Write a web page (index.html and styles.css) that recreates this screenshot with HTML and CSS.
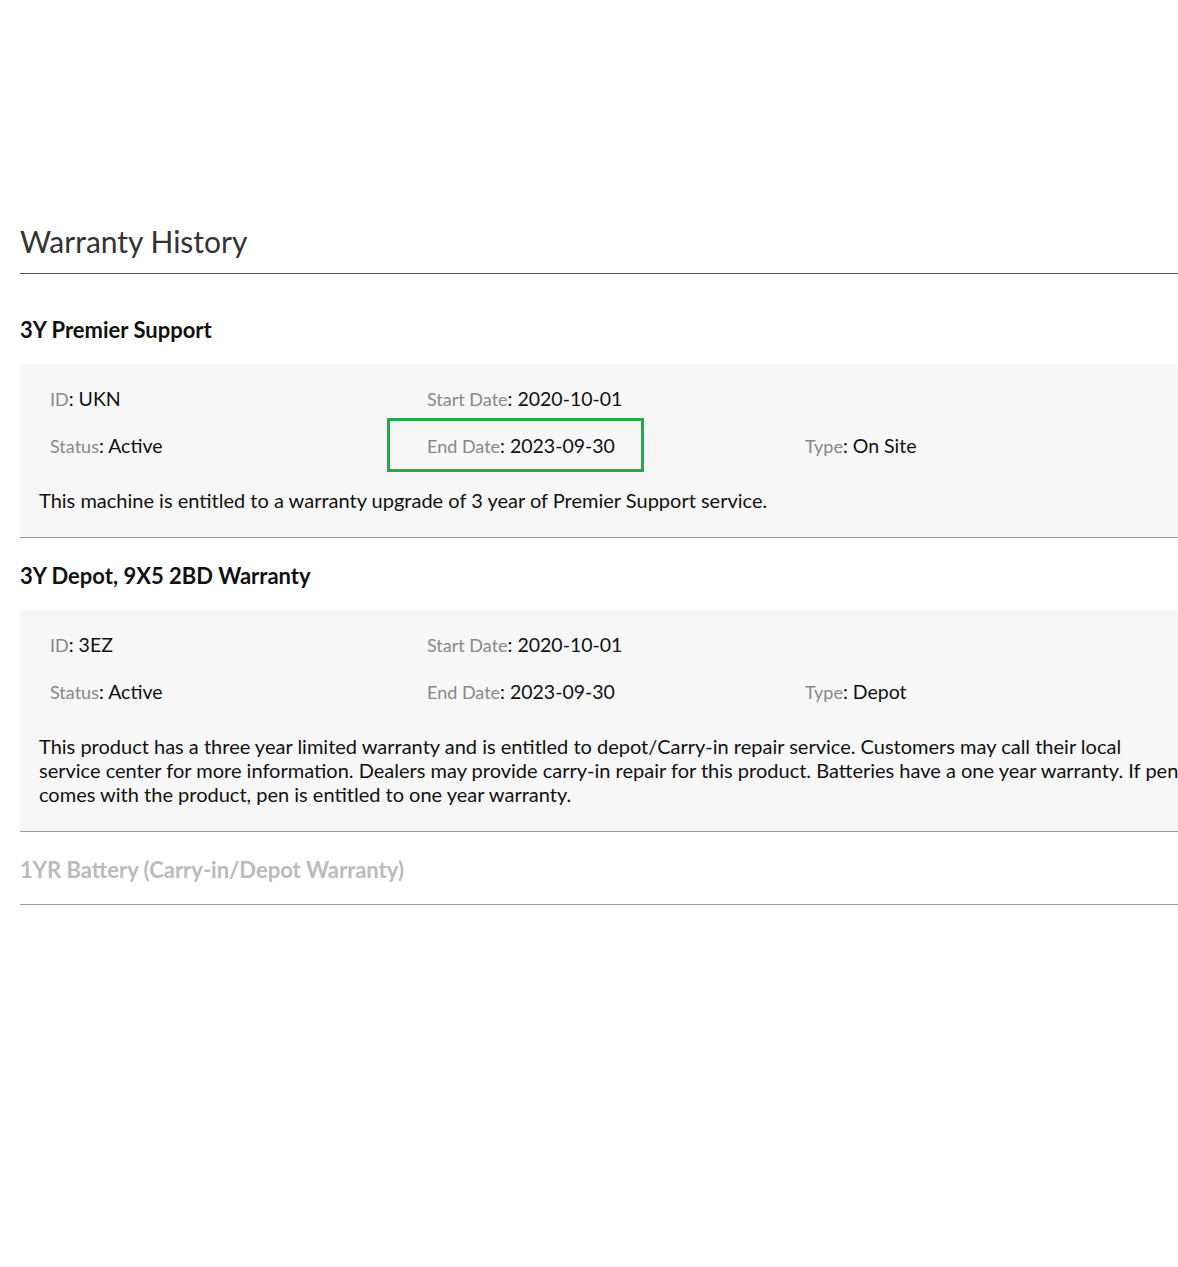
FILE: index.html
```html
<!DOCTYPE html>
<html lang="en">

<head>
    <meta charset="UTF-8">
    <meta name="viewport" content="width=device-width, initial-scale=1.0">
    <title>Warranty History</title>
    <link rel="stylesheet" href="styles.css">
</head>

<body>
    <div class="container">
        <h1 class="titulo">Warranty History</h1>

        <div class="garantia">
            <h2>3Y Premier Support</h2>
            <div class="panel">
                <div class="campos">
                    <div class="campo"><span class="etiqueta">ID</span>: UKN</div>
                    <div class="campo"><span class="etiqueta">Start Date</span>: 2020-10-01</div>
                    <div class="campo"></div>
                    <div class="campo"><span class="etiqueta">Status</span>: Active</div>
                    <div class="campo marcado"><span class="etiqueta">End Date</span>: 2023-09-30</div>
                    <div class="campo"><span class="etiqueta">Type</span>: On Site</div>
                </div>
                <p class="descripcion">This machine is entitled to a warranty upgrade of 3 year of Premier Support service.</p>
            </div>
        </div>

        <div class="garantia">
            <h2>3Y Depot, 9X5 2BD Warranty</h2>
            <div class="panel">
                <div class="campos">
                    <div class="campo"><span class="etiqueta">ID</span>: 3EZ</div>
                    <div class="campo"><span class="etiqueta">Start Date</span>: 2020-10-01</div>
                    <div class="campo"></div>
                    <div class="campo"><span class="etiqueta">Status</span>: Active</div>
                    <div class="campo"><span class="etiqueta">End Date</span>: 2023-09-30</div>
                    <div class="campo"><span class="etiqueta">Type</span>: Depot</div>
                </div>
                <p class="descripcion">This product has a three year limited warranty and is entitled to depot/Carry-in repair service. Customers may call their local service center for more information. Dealers may provide carry-in repair for this product. Batteries have a one year warranty. If pen comes with the product, pen is entitled to one year warranty.</p>
            </div>
        </div>

        <div class="garantia inactiva">
            <h2>1YR Battery (Carry-in/Depot Warranty)</h2>
        </div>
    </div>
</body>

</html>
```

FILE: styles.css
```css
body {
    font-family: Lato, "Open Sans", sans-serif;
    margin: 0;
    padding: 0;
    background-color: white;
    color: #111;
    overflow: hidden;
}

.container {
    width: 1180px;
    margin-left: 20px;
    padding-top: 224px;
}

.titulo {
    font-size: 30px;
    font-weight: normal;
    color: #333;
    margin: 0;
    line-height: 34px;
    padding-bottom: 15px;
    border-bottom: 1px solid #555;
    margin-bottom: 18px;
}

.garantia {
    border-bottom: 1px solid #999;
}

.garantia h2 {
    font-size: 22px;
    font-weight: bold;
    line-height: 28px;
    margin: 0;
    padding: 24px 0 20px;
    color: #111;
}

.inactiva h2 {
    color: #bbb;
}

.panel {
    background-color: #f7f7f7;
    padding: 23px 0 25px;
}

.campos {
    display: grid;
    grid-template-columns: 377px 378px 377px;
    row-gap: 23px;
    padding-left: 30px;
}

.campo {
    font-size: 19.5px;
    line-height: 24px;
    height: 24px;
    position: relative;
}

.etiqueta {
    font-size: 18px;
    line-height: 18px;
    color: #888;
}

.marcado::after {
    content: "";
    position: absolute;
    left: -40px;
    top: -16px;
    width: 251px;
    height: 48px;
    border: 3px solid #22a94a;
}

.descripcion {
    font-size: 20px;
    line-height: 24px;
    margin: 30px 0 0;
    padding: 0 19px;
}
```
